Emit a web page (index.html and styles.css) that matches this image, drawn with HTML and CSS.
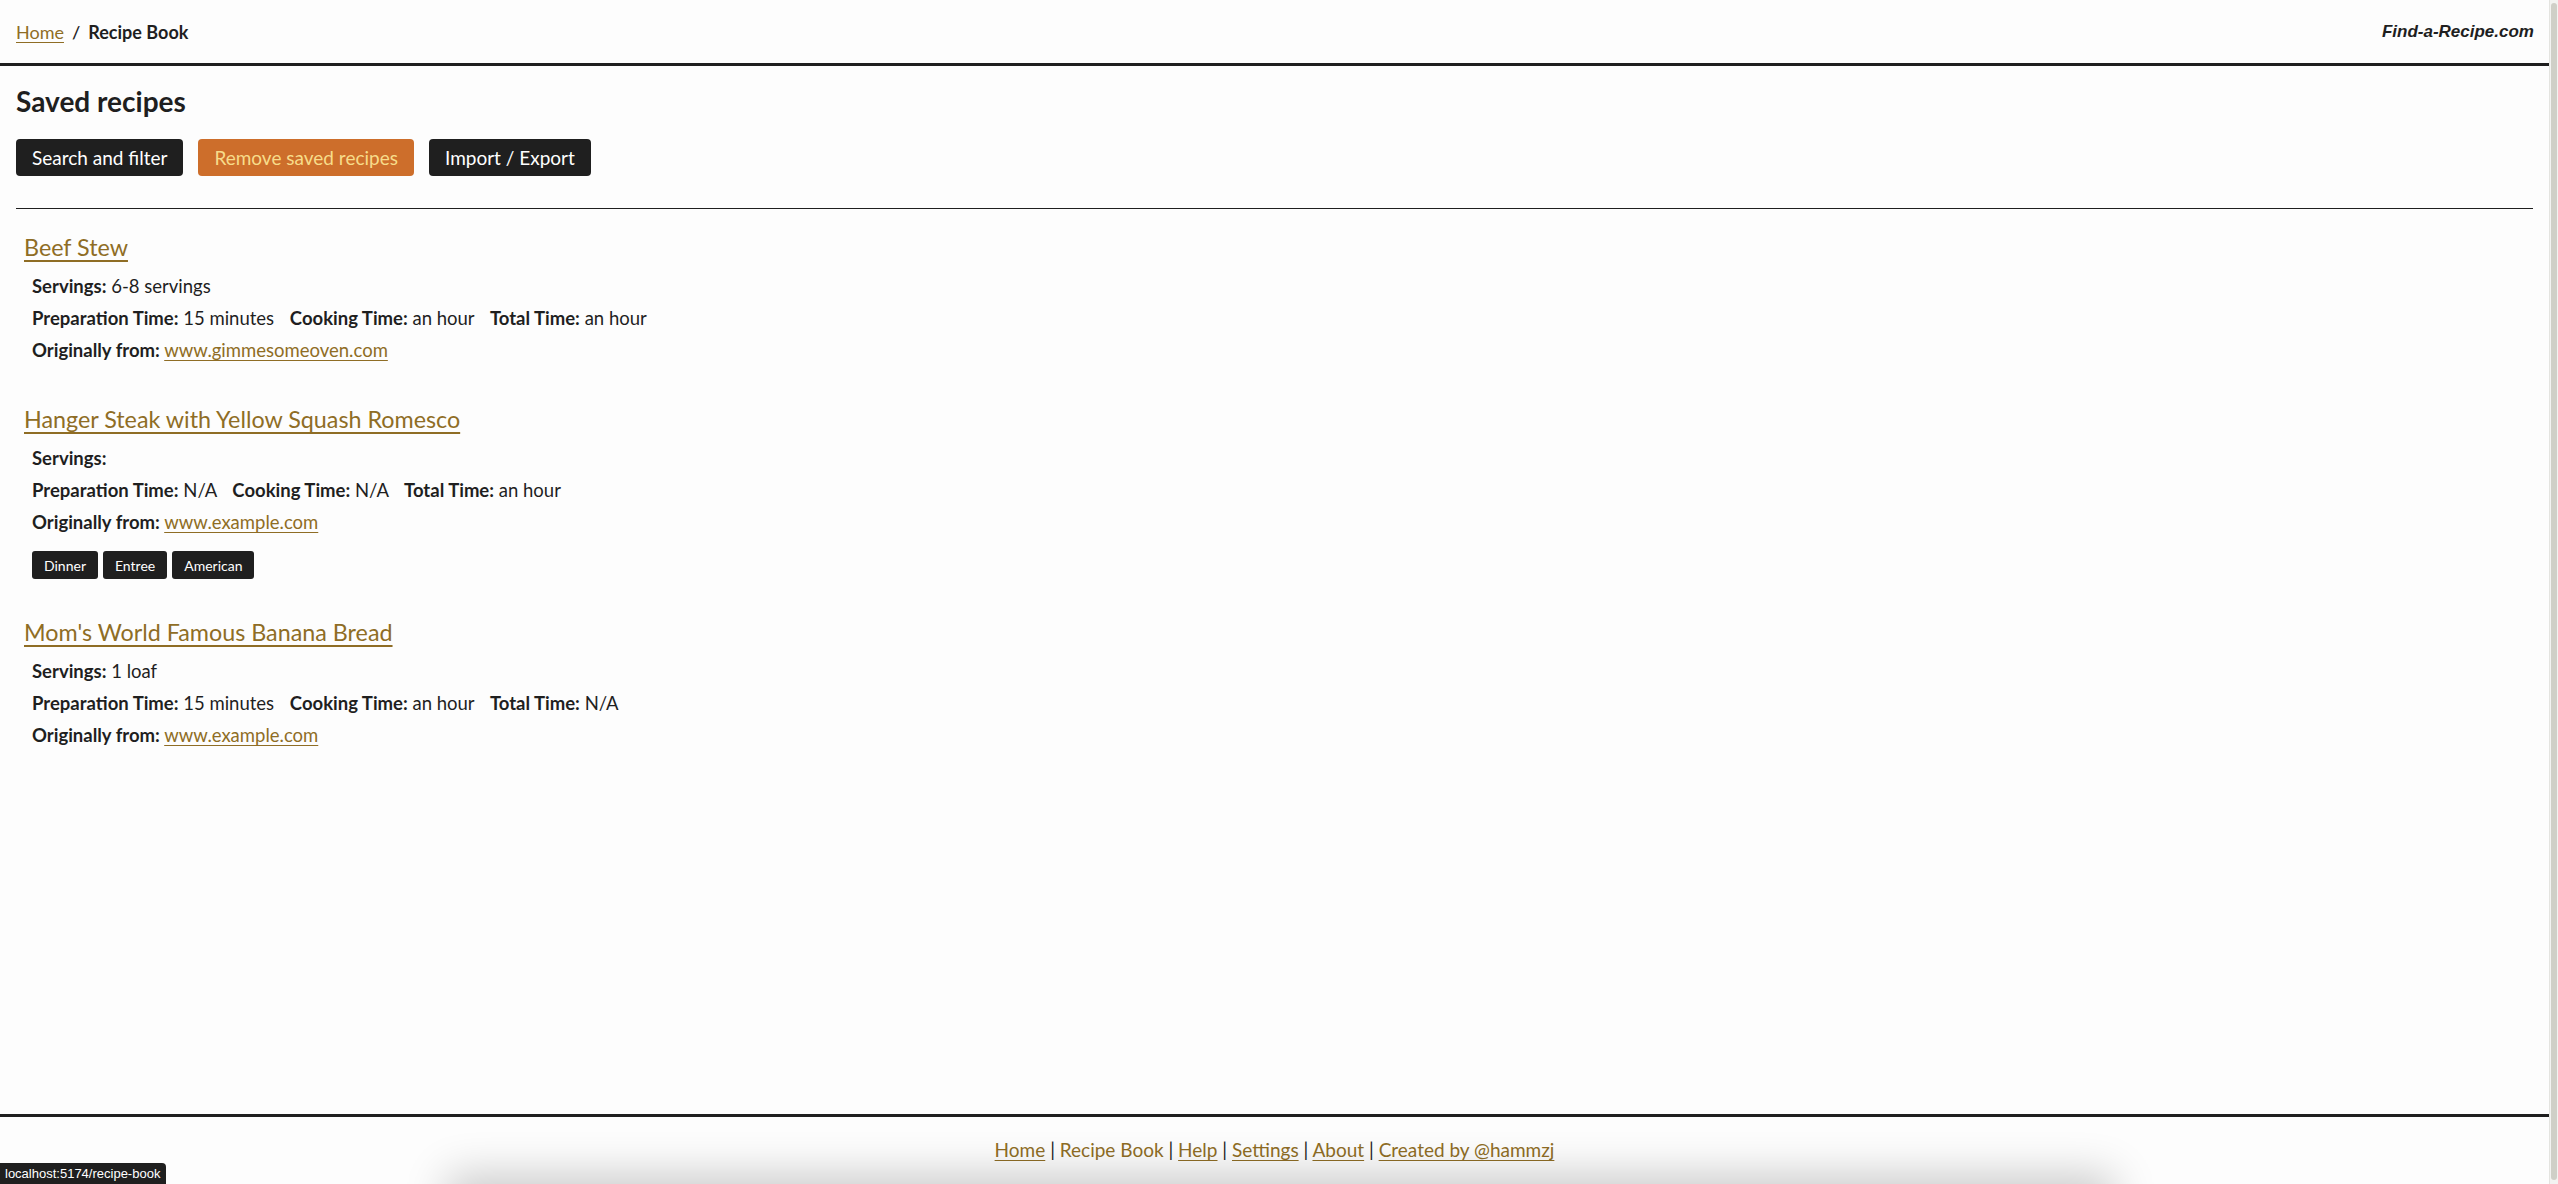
FILE: index.html
```html
<!DOCTYPE html>
<html lang="en">
<head>
<meta charset="utf-8">
<title>Recipe Book - Find-a-Recipe.com</title>
<link rel="stylesheet" href="styles.css">
</head>
<body>
<div class="page">
  <header class="site-header">
    <nav class="crumbs"><a href="#">Home</a><span class="sep">/</span><span class="current">Recipe Book</span></nav>
    <div class="brand">Find-a-Recipe.com</div>
  </header>
  <main class="main">
    <h1 class="page-title">Saved recipes</h1>
    <div class="actions">
      <button class="btn btn-dark">Search and filter</button>
      <button class="btn btn-orange">Remove saved recipes</button>
      <button class="btn btn-dark">Import / Export</button>
    </div>
    <hr class="rule">
    <ul class="recipes">
      <li class="recipe">
        <a class="recipe-title" href="#">Beef Stew</a>
        <div class="details">
          <div class="line"><b>Servings:</b> 6-8 servings</div>
          <div class="line"><b>Preparation Time:</b> 15 minutes <span class="gap"></span><b>Cooking Time:</b> an hour <span class="gap"></span><b>Total Time:</b> an hour</div>
          <div class="line"><b>Originally from:</b> <a href="#">www.gimmesomeoven.com</a></div>
        </div>
      </li>
      <li class="recipe">
        <a class="recipe-title" href="#">Hanger Steak with Yellow Squash Romesco</a>
        <div class="details">
          <div class="line"><b>Servings:</b></div>
          <div class="line"><b>Preparation Time:</b> N/A <span class="gap"></span><b>Cooking Time:</b> N/A <span class="gap"></span><b>Total Time:</b> an hour</div>
          <div class="line"><b>Originally from:</b> <a href="#">www.example.com</a></div>
          <div class="tags"><span class="tag">Dinner</span><span class="tag">Entree</span><span class="tag">American</span></div>
        </div>
      </li>
      <li class="recipe">
        <a class="recipe-title" href="#">Mom's World Famous Banana Bread</a>
        <div class="details">
          <div class="line"><b>Servings:</b> 1 loaf</div>
          <div class="line"><b>Preparation Time:</b> 15 minutes <span class="gap"></span><b>Cooking Time:</b> an hour <span class="gap"></span><b>Total Time:</b> N/A</div>
          <div class="line"><b>Originally from:</b> <a href="#">www.example.com</a></div>
        </div>
      </li>
    </ul>
  </main>
  <footer class="site-footer">
    <a href="#">Home</a> | <span class="here">Recipe Book</span> | <a href="#">Help</a> | <a href="#">Settings</a> | <a href="#">About</a> | <a href="#">Created by @hammzj</a>
  </footer>
</div>
<div class="scrollbar"><div class="thumb"></div></div>
<div class="bottom-shadow"></div>
<div class="status">localhost:5174/recipe-book</div>
</body>
</html>
```

FILE: styles.css
```css
html, body {
  margin: 0;
  padding: 0;
  height: 100%;
  overflow: hidden;
  background: #fdfdfd;
  color: #1f1f1f;
  font-family: Lato, "Liberation Sans", sans-serif;
  font-size: 18px;
}

a {
  color: #8f6d25;
  text-decoration: underline;
  text-underline-offset: 3px;
}

.page {
  width: calc(100% - 9px);
  height: 1184px;
  display: flex;
  flex-direction: column;
}

.site-header {
  height: 63px;
  border-bottom: 3px solid #1f1f1f;
  display: flex;
  align-items: center;
  justify-content: space-between;
  padding: 0 15px 0 16px;
  box-sizing: content-box;
}

.crumbs {
  font-size: 18px;
}

.crumbs .sep {
  margin: 0 8px;
  font-weight: 600;
}

.crumbs .current {
  font-weight: 700;
}

.brand {
  font-family: "Liberation Sans", Arial, sans-serif;
  font-weight: 700;
  font-style: italic;
  font-size: 17px;
}

.main {
  flex: 1;
  padding: 0 16px;
}

.page-title {
  margin: 19px 0 0;
  font-size: 28px;
  line-height: 32px;
  font-weight: 700;
}

.actions {
  display: flex;
  gap: 15px;
  margin-top: 22px;
}

.btn {
  height: 37px;
  padding: 0 16px;
  border: none;
  border-radius: 4px;
  font-family: Lato, "Liberation Sans", sans-serif;
  font-size: 19px;
  color: #ffffff;
  cursor: pointer;
}

.btn-dark {
  background: #1f1f1f;
}

.btn-orange {
  background: #cd6e2b;
  color: #f7dc8a;
}

.rule {
  margin: 32px 0 0;
  border: none;
  border-top: 1.5px solid #1f1f1f;
}

.recipes {
  list-style: none;
  margin: 22px 0 0;
  padding: 0 0 0 8px;
  display: flex;
  flex-direction: column;
  gap: 37px;
}

.recipe-title {
  display: block;
  width: max-content;
  font-size: 23.3px;
  line-height: 32px;
  text-decoration-thickness: 2px;
  text-underline-offset: 4px;
}

.details {
  padding-left: 8px;
  margin-top: 7px;
}

.line {
  line-height: 32px;
  font-size: 18.5px;
}

.line b {
  font-weight: 700;
}

.gap {
  display: inline-block;
  width: 11px;
}

.tags {
  display: flex;
  gap: 5px;
  margin-top: 13px;
}

.tag {
  height: 28px;
  padding: 0 12px;
  display: flex;
  align-items: center;
  background: #1f1f1f;
  color: #ffffff;
  border-radius: 3px;
  font-size: 14px;
}

.site-footer {
  height: 50px;
  padding-top: 17px;
  border-top: 3px solid #1f1f1f;
  text-align: center;
  box-sizing: content-box;
  line-height: 32px;
  font-size: 19px;
}

.site-footer a,
.site-footer .here {
  color: #8f6d25;
}

.scrollbar {
  position: fixed;
  top: 0;
  right: 0;
  width: 9px;
  height: 100%;
  background: #f3f3f1;
  border-left: 1px solid #e4e4e0;
  box-sizing: border-box;
}

.scrollbar .thumb {
  position: absolute;
  top: 3px;
  bottom: 4px;
  left: 1px;
  right: 1px;
  background: #cfcfc7;
  border-radius: 3px;
}

.bottom-shadow {
  position: fixed;
  left: 457px;
  width: 1647px;
  bottom: -60px;
  height: 60px;
  box-shadow: 0 0 44px 10px rgba(0, 0, 0, 0.2);
  background: #f0f0f0;
}

.status {
  position: fixed;
  left: 0;
  bottom: 0;
  height: 21px;
  padding: 0 6px 0 5px;
  display: flex;
  align-items: center;
  background: #1f1f1f;
  color: #ffffff;
  font-family: "Liberation Sans", Arial, sans-serif;
  font-size: 13px;
  border-top-right-radius: 4px;
}
```
